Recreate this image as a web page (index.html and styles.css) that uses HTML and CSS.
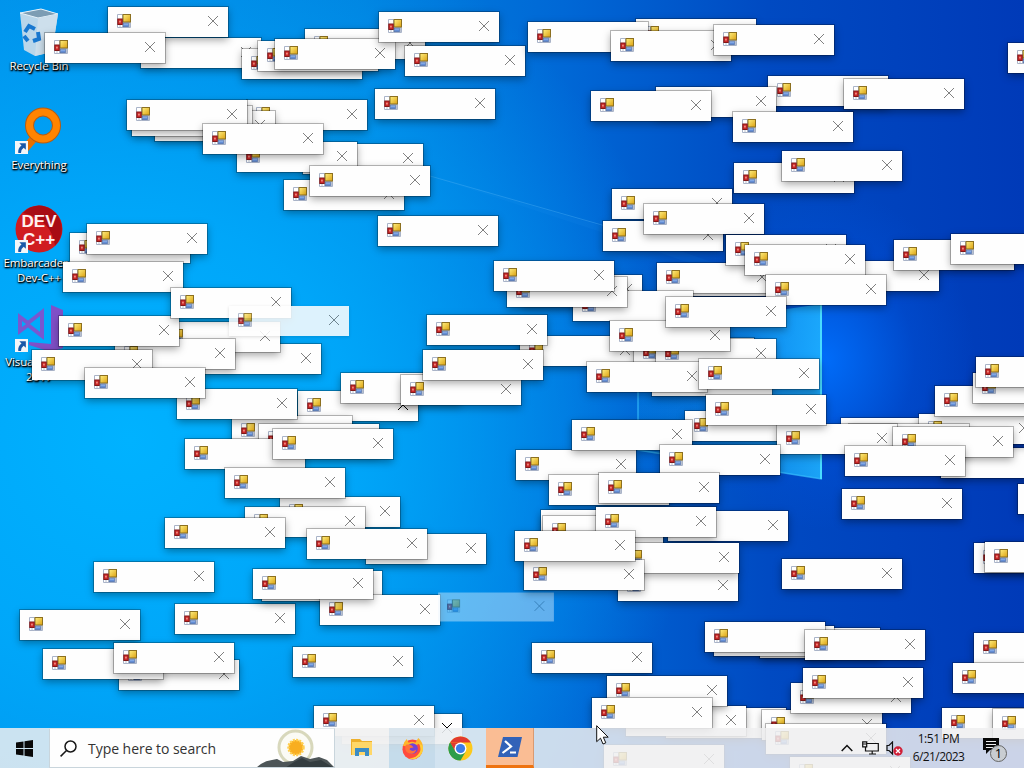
FILE: index.html
```html
<!DOCTYPE html>
<html lang="en">
<head>
<meta charset="utf-8">
<title>Desktop</title>
<link rel="stylesheet" href="styles.css">
</head>
<body>
<svg class="defs" width="0" height="0">
  <defs>
    <linearGradient id="gold" x1="0" y1="0" x2="1" y2="1"><stop offset="0" stop-color="#fff080"/><stop offset="1" stop-color="#dca010"/></linearGradient>
    <linearGradient id="steel" x1="0" y1="0" x2="0" y2="1"><stop offset="0" stop-color="#a8c8f4"/><stop offset="1" stop-color="#4070c8"/></linearGradient>
    <symbol id="form" viewBox="0 0 14 14">
      <path d="M.5.5h5v13h-5zM5.500 8.500h8v5h-8z" fill="#fff" stroke="#aab4c8"/>
      <path d="M3 10v3M12.500 9v4" stroke="#b8c0d0"/>
      <rect x="6" y=".5" width="7.500" height="7.500" fill="url(#gold)" stroke="#8c7020"/>
      <rect x=".8" y="5" width="4.400" height="5.500" fill="#d02828" stroke="#801818"/>
      <rect x="2.300" y="6.700" width="1.300" height="1.800" fill="#f8b0a0"/>
      <rect x="6.500" y="9.200" width="5" height="3.500" fill="url(#steel)" stroke="#5070a8" stroke-width=".7"/>
    </symbol>
    <symbol id="cross" viewBox="0 0 12 12"><path d="M1 1l10 10M11 1L1 11" fill="none" stroke="currentColor"/></symbol>
    <symbol id="shortcut" viewBox="0 0 12 12"><path d="M0 0h12v12H0z" fill="#f4f6f8"/><path d="M4 2h6v6L8 6.300Q5.500 8 5.500 11H3Q2.500 7 6 4.200z" fill="#1858a8"/></symbol>
  </defs>
</svg>
<main class="desktop">
  <svg class="wallpaper" viewBox="0 0 1024 768">
    <defs>
      <linearGradient id="pane" x1="0" y1="0" x2="1" y2="0"><stop offset="0" stop-color="#08a0f0" stop-opacity=".15"/><stop offset="1" stop-color="#20b4ff" stop-opacity=".85"/></linearGradient>
    </defs>
    <path d="M430 176L640 237L822 300V310L610 235z" fill="#3cb0ff" opacity=".07"/>
    <path d="M430 176L630 233" stroke="#58b8f8" opacity=".35"/>
    <path d="M638 330L822 304V479L638 450z" fill="url(#pane)"/>
    <path d="M638 330V450L822 479" fill="none" stroke="#38c0ff" stroke-width="1.500" opacity=".7"/>
    <path d="M821 304V479" stroke="#48dcff" stroke-width="2"/>
  </svg>
  <nav class="shortcuts">
    <div class="shortcut">
      <svg class="art" viewBox="0 0 48 48"><path d="M5 5L26 1l17 5-6 38-17 4-11-6z" fill="#b9d6ea"/><path d="M5 5l18 5 20-4L26 1z" fill="#7d9db4" stroke="#e6f2fa"/><path d="M23 10l20-4-6 38-17 4z" fill="#cddfec"/><g fill="none" stroke="#1878d0" stroke-width="4"><path d="M10 24l4-6 6 3M23 24l1 7-6 2M13 33l-4-5"/></g></svg>
      <span>Recycle Bin</span>
    </div>
    <div class="shortcut">
      <svg class="art" viewBox="0 0 48 48"><path d="M20 30L8 44" stroke="#e87000" stroke-width="8"/><circle cx="28" cy="18.500" r="13.500" fill="none" stroke="#b85c10" stroke-width="9"/><circle cx="28" cy="18.500" r="13.500" fill="none" stroke="#ff8400" stroke-width="7"/><use href="#shortcut" x="0" y="34" width="13" height="13"/></svg>
      <span>Everything</span>
    </div>
    <div class="shortcut">
      <svg class="art" viewBox="0 0 48 48"><circle cx="24" cy="24" r="23.500" fill="#d01c20"/><path d="M24 .5a23.500 23.500 0 0 1 16 40Q36 14 8 8A23 23 0 0 1 24 .5" fill="#a80c14"/><text class="devtext" x="24" y="22" text-anchor="middle">DEV</text><text class="devtext" x="24" y="40" text-anchor="middle">C++</text><use href="#shortcut" x="0" y="35" width="13" height="13"/></svg>
      <span>Embarcadero<br>Dev-C++</span>
    </div>
    <div class="shortcut">
      <svg class="art" viewBox="0 0 48 48"><path d="M36 1l12 5v38l-12 4-22-7v-3l22 2z" fill="#8050c8"/><path d="M5 13l8 6 14-11v24l-14-11-8 6z" fill="none" stroke="#7858d0" stroke-width="4"/><use href="#shortcut" x="0" y="35" width="13" height="13"/></svg>
      <span>Visual Studio<br>2017</span>
    </div>
  </nav>
  <section class="windows" id="windows"></section>
</main>
<footer class="taskbar">
  <div class="start"><svg width="17" height="17" viewBox="0 0 17 17"><path d="M0 2.500L7.500 1.500V8H0zM8.500 1.300L17 0v8H8.500zM0 9h7.500v6.500L0 14.500zM8.500 9H17v8l-8.500-1.300z" fill="#080808"/></svg></div>
  <div class="search">
    <svg class="lens" width="17" height="17" viewBox="0 0 17 17" fill="none" stroke="#181818" stroke-width="1.500"><circle cx="10.500" cy="6.500" r="5.500"/><path d="M6.500 10.500L.6 16.400"/></svg>
    <span>Type here to search</span>
    <svg class="sun" width="84" height="40" viewBox="0 0 84 40"><circle cx="44.500" cy="19.500" r="16.500" fill="#fbfbf5" stroke="#d8d8bc" stroke-width="3"/><circle cx="45" cy="19.500" r="7.500" fill="#f8ae20" stroke="#ffcf50" stroke-width="2.500" stroke-dasharray="2 1.200"/><path d="M5 40Q12 33 21 32l5-1 6 3 10-1 8-5 9 3 9-2 8 3 8 8z" fill="#4d5557"/><path d="M34 40l9-6 8-4 8 4 11-2 13 8z" fill="#343d40"/></svg>
  </div>
  <div class="task light"><svg width="22" height="20" viewBox="0 0 22 20"><path d="M0 1h9l2 2h10v14H0z" fill="#eeb02c"/><path d="M1 4h20v13H1z" fill="#ffd768"/><path d="M4 18v-8h14v8h-4v-4H8v4z" fill="#3c8cc4"/></svg></div>
  <div class="task shade"><svg width="23" height="23" viewBox="0 0 24 24"><circle cx="12" cy="13" r="10.500" fill="#ff4a3d"/><path d="M2 9Q3 5 6 2l2 4q4-2 7 0l3-5q5 4 5 11-1-4-4-5l-5 2-8 1z" fill="#ffb629"/><path d="M22.500 9a11 11 0 0 1-15 13q8 1 12-6 2-4-1-10z" fill="#ffcf38"/><circle cx="12" cy="12" r="5.500" fill="#7543d8"/><path d="M5 8q6-1 8 3-4 0-4 2 3 3 7 0-2 6-8 4-5-2-3-9" fill="#ff7138"/></svg></div>
  <div class="task pale"><svg width="25" height="25" viewBox="0 0 24 24"><circle cx="12" cy="12" r="11.500" fill="#fcc91c"/><path d="M2 6.300A11.500 11.500 0 0 1 22 6.300H12z" fill="#e23a2e"/><path d="M2 6.300A11.500 11.500 0 0 0 12 23.500l5-8.700L7 14.800z" fill="#2d9d4a"/><path d="M2 6.300L7 15l5-3V6.300z" fill="#e23a2e"/><path d="M2 6.300L7 15l5 2.600-3.500 5.300A11.500 11.500 0 0 1 2 6.300" fill="#2d9d4a"/><circle cx="12" cy="12" r="5.700" fill="#fff"/><circle cx="12" cy="12" r="4.400" fill="#3b7de8"/></svg></div>
  <div class="task active"><svg width="24" height="20" viewBox="0 0 24 20"><path d="M5 0h19l-4.500 20H0z" fill="#3262b8"/><path d="M7 4l6 5.500L4.500 16M12 15.500h6" fill="none" stroke="#fff" stroke-width="2.200"/></svg></div>
  <div class="tray">
    <svg width="12" height="8" viewBox="0 0 12 8" fill="none" stroke="#111" stroke-width="1.500"><path d="M.7 7L6 1.500 11.300 7"/></svg>
    <svg width="17" height="14" viewBox="0 0 17 14" fill="none" stroke="#111" stroke-width="1.200"><path d="M4.500 2.500h11.800v7.500H3.500V6M7 13h7M10.200 10v3"/><path d="M.7.800h4v5h-4zM1 3h3.500"/></svg>
    <svg width="17" height="15" viewBox="0 0 17 15"><path d="M1 4.500h2l3.500-3.500v12L3 9.500H1z" fill="none" stroke="#111" stroke-width="1.200"/><circle cx="12" cy="10" r="4.700" fill="#d02038"/><path d="M10 8l4 4M14 8l-4 4" stroke="#fff" stroke-width="1.300"/></svg>
    <div class="clock"><span>1:51 PM</span><span class="date">6/21/2023</span></div>
    <svg class="notes" width="26" height="26" viewBox="0 0 26 26"><path d="M1 1h16v12H8l-4 4v-4H1z" fill="#080808"/><path d="M4 4.500h10M4 7.500h10M4 10.500h7" stroke="#eee"/><circle cx="16.500" cy="16.500" r="8" fill="#c8ccd0" fill-opacity=".93" stroke="#666"/><text x="16.500" y="21" text-anchor="middle">1</text></svg>
  </div>
</footer>
<svg class="cursor" width="13" height="20" viewBox="0 0 13 20"><path d="M.7.700v16l3.800-3.500 2.500 5.800 2.800-1.200-2.500-5.600h4.900z" fill="#fff" stroke="#111"/></svg>
<script src="windows.js"></script>
</body>
</html>
```

FILE: styles.css
```css
* { box-sizing: border-box; }
body { margin: 0; width: 1024px; height: 768px; overflow: hidden; font-family: "Open Sans", "Noto Sans", sans-serif; }
.defs { position: absolute; }
.desktop {
  position: relative; height: 768px; overflow: hidden;
  background:
    radial-gradient(ellipse 150px 170px at 825px 360px, rgba(0,112,255,.9), rgba(0,85,225,.35) 60%, rgba(0,75,210,0)),
    radial-gradient(ellipse 570px 560px at 130px 440px, rgba(0,178,255,1) 0, rgba(0,172,253,.85) 40%, rgba(0,150,245,0) 100%),
    linear-gradient(90deg, #008ce6 0, #0080de 35%, #0068d6 55%, #004ac2 75%, #003ab8 100%);
}
.wallpaper { position: absolute; inset: 0; }
.shortcuts { position: relative; display: flex; flex-direction: column; width: 78px; padding-top: 8px; }
.shortcut { height: 98.700px; display: flex; flex-direction: column; align-items: center; gap: 2px; }
.art { width: 48px; height: 48px; flex: none; }
.shortcut span { font-size: 11.500px; line-height: 15px; color: #fff; text-align: center; white-space: nowrap; letter-spacing: -.1px; text-shadow: 1px 1px 2px #000, 0 1px 2px #000, 1px 1px 1px #000; }
.devtext { font: bold 17px "Liberation Sans", sans-serif; fill: #fff0f0; }
.window {
  position: absolute; width: 120px; height: 30px; padding: 7px 9px; background: #fefefe;
  display: flex; justify-content: space-between; color: #808080;
  box-shadow: 0 0 0 1px rgba(0,0,0,.26), 0 3px 8px rgba(0,0,0,.36);
}
.window svg { width: 14px; height: 14px; }
.window .x { width: 12px; height: 12px; margin-top: 1px; }
.window.focused { color: #000; }
.window.opening { opacity: .87; box-shadow: 0 1px 3px rgba(0,0,0,.15); }
.window.faint { opacity: .42; transform: scale(.965); box-shadow: none; background: #eaf6ff; }
.taskbar { position: relative; margin-top: -40px; height: 40px; display: flex; background: rgba(238,239,240,.85); }
.start { width: 49px; display: flex; align-items: center; justify-content: center; }
.search { width: 286px; background: #fefefe; border: 1px solid #c9d5dc; border-top-color: #e3e8ea; display: flex; align-items: center; padding-left: 10px; overflow: hidden; }
.search .lens { flex: none; }
.search span { flex: none; width: 130px; margin-left: 11px; font-size: 14px; color: #333; white-space: nowrap; letter-spacing: -.04px; }
.search .sun { margin-left: 33px; flex: none; }
.task { width: 52px; display: flex; align-items: center; justify-content: center; }
.task.light { width: 54px; background: rgba(242,242,242,.75); }
.task.shade { width: 46px; background: rgba(190,215,230,.45); }
.task.pale { width: 51px; background: rgba(230,240,246,.3); }
.task.active { width: 48px; background: #fabd94; border-bottom: 3px solid #ee7310; border-right: 1px solid #d99a72; }
.tray { flex: 1; display: flex; align-items: center; justify-content: flex-end; gap: 7px; padding-right: 16px; }
.tray > svg { flex: none; }
.tray > svg:first-child { margin-right: 2px; }
.clock { width: 57px; margin-left: 0; display: flex; flex-direction: column; align-items: center; font-size: 12px; line-height: 18px; color: #111; letter-spacing: -.45px; }
.clock .date { letter-spacing: -.6px; }
.notes { margin: 4px 0 0 8px; font-size: 13px; }
.cursor { position: absolute; left: 596px; top: 725px; }
```

FILE: windows.js
```javascript
// Open windows, back to front: [left, top, state]
const windows = [
  [141,38],[108,7],[45,33],[305,29],[242,49],[258,41],[275,39],[379,12],[405,46],[375,89],
  [247,100],[155,111],[132,106],[127,100],[303,144],[237,142],[203,124],[284,180],[310,166],[378,216],
  [636,19],[528,22],[611,31],[714,25],[768,76],[656,87],[591,91],[844,79],[733,112],
  [734,163],[782,151],[1008,43],[612,189],[603,221],[644,204],
  [819,261],[894,240],[951,234],[670,266],[657,263],[726,235],[745,245],[766,275],
  [522,275],[573,291],[507,277],[494,261],
  [520,336],[652,366],[634,338],[656,339],[587,362],[610,321],[666,297],[699,359],
  [70,233],[87,224],[63,262],[201,344],[160,322],[115,339],[59,316],[171,288],[32,350],
  [298,391,"focused"],[232,416],[177,389],[85,368],[229,306,"opening"],
  [341,373],[401,375],[427,315],[423,350],
  [259,424],[185,439],[273,429],[280,497],[245,507],[225,468],[165,518],[366,534],[307,529],
  [94,562],[175,604],[262,571],[320,595],[253,569],[20,610],[119,660],[43,649],[114,643],[293,647],
  [342,714,"focused"],[314,706],[436,592,"faint"],
  [685,411],[841,418],[941,448],[919,414],[849,424],[777,424],[706,395],[893,427],[845,446],[842,489],
  [935,386],[973,373],[976,357],[1018,484],[974,543],[985,542],[782,559],
  [516,450],[572,420],[549,475],[660,445],[599,473],[668,511],[541,510],[543,516],[596,507],
  [618,571],[619,543],[524,560],[515,531],
  [532,643],[666,708],[626,706],[607,676],[592,698],
  [760,628],[714,626],[705,622],[805,630],[762,710],[791,683],[803,668],[766,724],
  [974,633],[953,663],[942,708],[993,709],[604,745],[790,757]
];

const layer = document.getElementById("windows");
for (const [left, top, state] of windows) {
  const win = document.createElement("div");
  win.className = state ? "window " + state : "window";
  win.style.left = left + "px";
  win.style.top = top + "px";
  win.innerHTML = '<svg><use href="#form"/></svg><svg class="x"><use href="#cross"/></svg>';
  layer.append(win);
}
```
